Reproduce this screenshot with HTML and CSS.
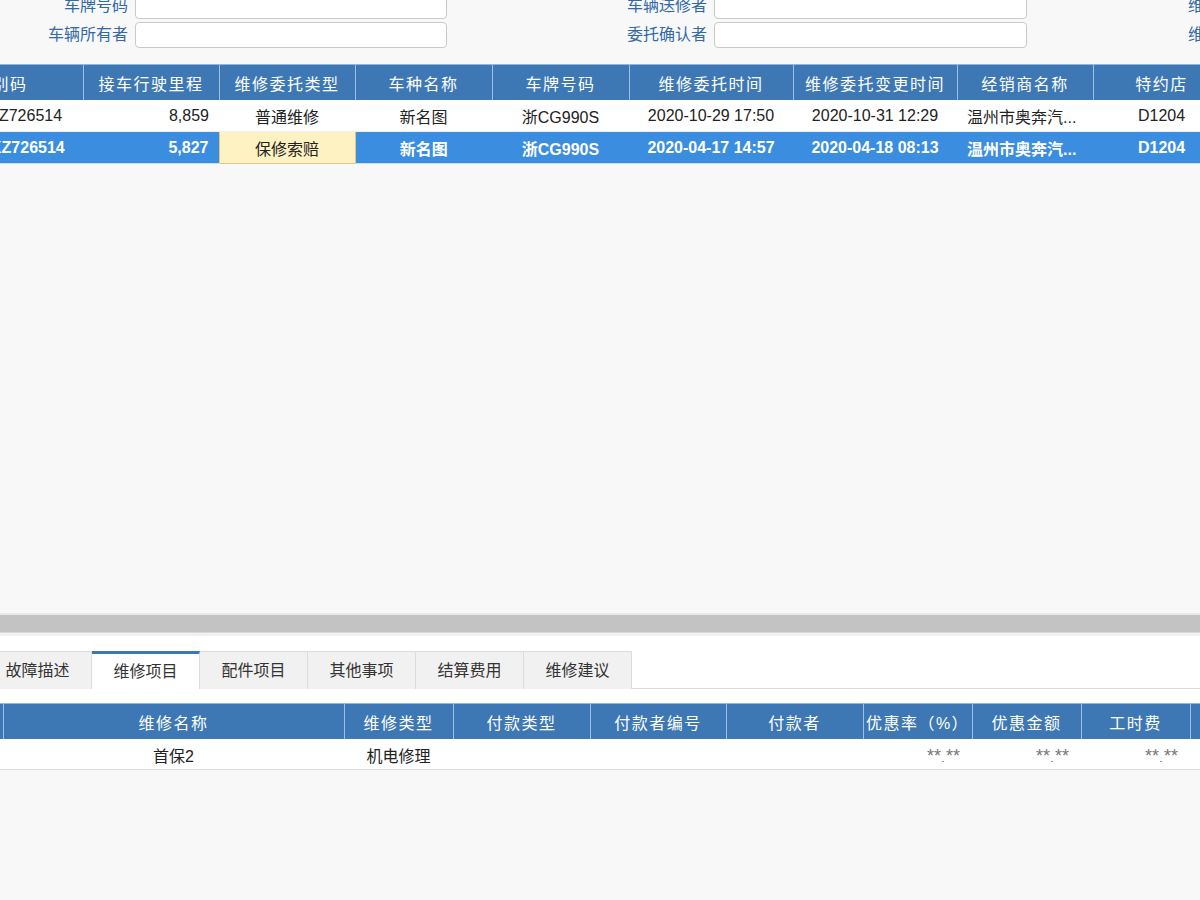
FILE: index.html
```html
<!DOCTYPE html>
<html lang="zh-CN">
<head>
<meta charset="utf-8">
<title>维修委托</title>
<link rel="stylesheet" href="styles.css">
</head>
<body>
<div class="page">
  <section class="upper">
    <div class="form">
      <span class="lbl">车牌号码</span><div class="inp"></div>
      <span class="lbl">车辆送修者</span><div class="inp"></div>
      <span class="lbl">维修委托人</span>
      <span class="lbl">车辆所有者</span><div class="inp"></div>
      <span class="lbl">委托确认者</span><div class="inp"></div>
      <span class="lbl">维修接待员</span>
    </div>
    <div class="grid-wrap">
      <table class="grid main-grid">
        <colgroup>
          <col class="w186"><col class="w136"><col class="w136"><col class="w137"><col class="w137"><col class="w164"><col class="w164"><col class="w136"><col class="w137">
        </colgroup>
        <thead>
          <tr><th class="vin">车辆识别码</th><th>接车行驶里程</th><th>维修委托类型</th><th>车种名称</th><th>车牌号码</th><th>维修委托时间</th><th>维修委托变更时间</th><th>经销商名称</th><th>特约店</th></tr>
        </thead>
        <tbody>
          <tr>
            <td class="l vin">LGWEF4A59KZ726514</td><td class="r">8,859</td><td>普通维修</td><td>新名图</td><td>浙CG990S</td><td>2020-10-29 17:50</td><td>2020-10-31 12:29</td><td class="l">温州市奥奔汽...</td><td>D1204</td>
          </tr>
          <tr class="sel">
            <td class="l vin">LGWEF4A59KZ726514</td><td class="r">5,827</td><td class="edit">保修索赔</td><td>新名图</td><td>浙CG990S</td><td>2020-04-17 14:57</td><td>2020-04-18 08:13</td><td class="l">温州市奥奔汽...</td><td>D1204</td>
          </tr>
        </tbody>
      </table>
    </div>
  </section>
  <div class="splitter"></div>
  <section class="lower">
    <div class="tabs">
      <div class="tab">故障描述</div>
      <div class="tab active">维修项目</div>
      <div class="tab">配件项目</div>
      <div class="tab">其他事项</div>
      <div class="tab">结算费用</div>
      <div class="tab">维修建议</div>
    </div>
    <div class="grid-wrap lower-wrap">
      <table class="grid sub-grid">
        <colgroup>
          <col class="w40"><col class="w341"><col class="w109"><col class="w137"><col class="w136"><col class="w137"><col class="w109"><col class="w109"><col class="w109"><col class="w109">
        </colgroup>
        <thead>
          <tr><th></th><th>维修名称</th><th>维修类型</th><th>付款类型</th><th>付款者编号</th><th>付款者</th><th>优惠率（%）</th><th>优惠金额</th><th>工时费</th><th>材料费</th></tr>
        </thead>
        <tbody>
          <tr>
            <td></td><td>首保2</td><td>机电修理</td><td></td><td></td><td></td>
            <td class="r"><span class="mask"><b>** **</b><i></i></span></td>
            <td class="r"><span class="mask"><b>** **</b><i></i></span></td>
            <td class="r"><span class="mask"><b>** **</b><i></i></span></td>
            <td class="r"><span class="mask"><b>** **</b><i></i></span></td>
          </tr>
        </tbody>
      </table>
    </div>
  </section>
</div>
</body>
</html>
```
FILE: styles.css
```css
html, body {
  margin: 0;
  padding: 0;
}
body {
  font-family: "Liberation Sans", "Noto Sans CJK SC", sans-serif;
  font-size: 16px;
  color: #222;
  background: #f8f8f8;
}
.page {
  width: 1200px;
  height: 900px;
  overflow: hidden;
  display: grid;
  grid-template-rows: 613px 23px 1fr;
}
.upper {
  overflow: hidden;
  display: flex;
  flex-direction: column;
  background: #f8f8f8;
}
.form {
  margin-top: -7px;
  display: grid;
  grid-template-columns: 128px 312px 253px 313px 234px;
  grid-auto-rows: 26px;
  column-gap: 7px;
  row-gap: 3px;
  width: 1300px;
}
.lbl {
  color: #3369a6;
  text-align: right;
  line-height: 26px;
  white-space: nowrap;
}
.inp {
  background: #fff;
  border: 1px solid #c9c9c9;
  border-radius: 4px;
  box-sizing: border-box;
}
.grid-wrap {
  margin-top: 16px;
  overflow: hidden;
}
.grid {
  border-collapse: collapse;
  table-layout: fixed;
}
.main-grid {
  margin-left: -103px;
  width: 1333px;
}
.w186 { width: 186px; }
.w136 { width: 136px; }
.w137 { width: 137px; }
.w164 { width: 164px; }
.w40 { width: 40px; }
.w341 { width: 341px; }
.w109 { width: 109px; }
.grid th {
  background: #3d78b4;
  color: #fff;
  font-weight: normal;
  letter-spacing: 1.5px;
  height: 35px;
  padding: 0;
  border-right: 1px solid #9dc1e4;
  border-top: 1px solid #8fb6dd;
  white-space: nowrap;
  overflow: hidden;
}
.grid th.vin {
  text-indent: -12px;
}
.grid td {
  height: 30px;
  padding: 1px 10px 0;
  text-align: center;
  white-space: nowrap;
  overflow: hidden;
  background: #fff;
  border-bottom: 1px solid #f0f0f0;
}
.grid td.l { text-align: left; }
.grid td.r { text-align: right; }
.grid td.vin { text-indent: -13px; }
.grid tr.sel td {
  background: #3b8de0;
  color: #fff;
  font-weight: bold;
  border-bottom: 1px solid #c9dff5;
}
.grid tr.sel td.edit {
  background: #fff2c2;
  color: #222;
  font-weight: normal;
  border: 1px solid #dcc78c;
}
.splitter {
  background: #c3c3c3;
  border-top: 2px solid #e9e9e9;
  border-bottom: 3px solid #f1f1f1;
  box-shadow: inset 0 -1px 0 #d9d9d9;
}
.lower {
  background: #fff;
  padding-top: 15px;
  display: flex;
  flex-direction: column;
}
.tabs {
  display: flex;
  height: 37px;
  border-bottom: 1px solid #dcdcdc;
  margin-left: -16px;
}
.tab {
  width: 108px;
  flex: none;
  box-sizing: border-box;
  background: #f1f1f1;
  border: 1px solid #dcdcdc;
  border-left: none;
  border-bottom: none;
  color: #333;
  text-align: center;
  line-height: 37px;
  margin-bottom: -1px;
  height: 38px;
}
.tab.active {
  background: #fff;
  border-top: 3px solid #3d78b4;
  line-height: 35px;
}
.lower-wrap {
  margin-top: 14px;
  flex: 1;
  background: #f8f8f8;
}
.sub-grid {
  margin-left: -37px;
  width: 1336px;
}
.sub-grid td {
  height: 29px;
  border-bottom: 1px solid #dedede;
}
.sub-grid td.r { padding-right: 12px; }
.mask {
  display: inline-flex;
  flex-direction: column;
  align-items: center;
  gap: 0;
  vertical-align: middle;
}
.mask b {
  font-weight: normal;
  font-size: 18px;
  line-height: 14px;
  height: 12px;
  overflow: hidden;
  color: #777;
  letter-spacing: 0;
}
.mask i {
  display: block;
  width: 2px;
  height: 1px;
  background: #999;
}
```
